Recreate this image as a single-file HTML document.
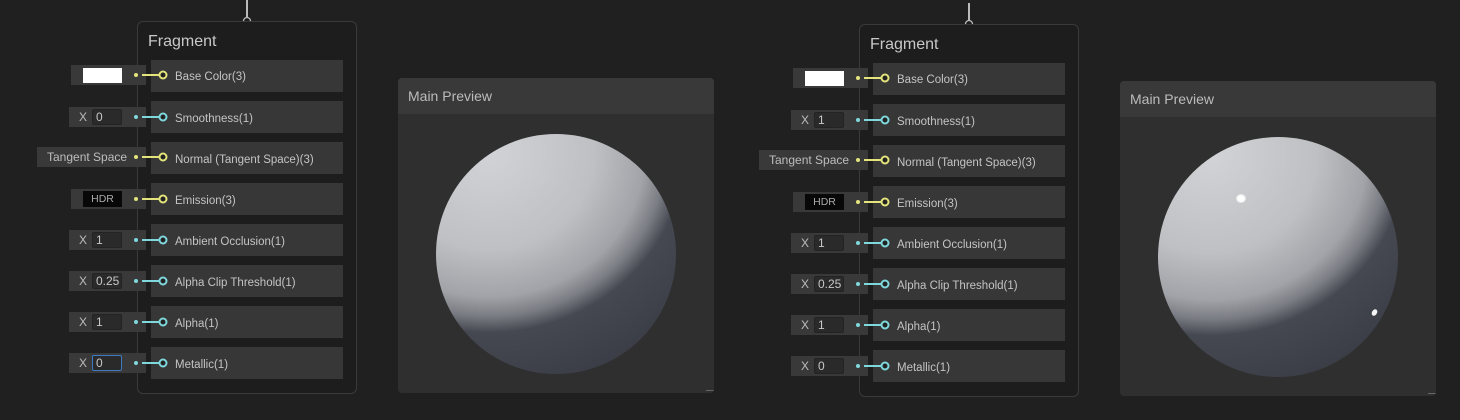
<!DOCTYPE html>
<html><head><meta charset="utf-8"><style>
*{margin:0;padding:0;box-sizing:border-box}
body{width:1460px;height:417px;background:#202020;position:relative;overflow:hidden;font-family:"Liberation Sans",sans-serif;}
.a{position:absolute}
.node{position:absolute;left:137px;top:21px;width:220px;height:373px;border:1px solid #3a3a3a;border-radius:6px;background:#1d1d1d}
.title{position:absolute;left:148px;top:33px;color:#c8c8c8;font-size:16px}
.slot{position:absolute;left:151px;width:192px;height:32px;background:#373737}
.lab{position:absolute;left:175px;font-size:11.5px;color:#c4c4c4;line-height:14px;white-space:nowrap}
.inp{position:absolute;height:20px;background:#393939;color:#bdbdbd;font-size:12px;white-space:nowrap}
.fld{position:absolute;top:2px;height:16px;background:#2a2a2a;border:1px solid #232323;border-radius:2px;color:#c8c8c8;font-size:12px;padding-left:3px;line-height:14px}
.prev{position:absolute;width:316px;height:315px;background:#2f2f2f;border-radius:4px;overflow:hidden}
.ph{height:36px;background:#393939;color:#bcbcbc;font-size:14px;padding:10px 0 0 10px}
.sph{position:absolute;width:240px;height:240px;border-radius:50%;
background:radial-gradient(ellipse 125% 115% at 22% 8%,#d2d3d6 0%,#bfc0c3 35%,#a2a3a8 52%,#7a7c83 59%,#454851 65%,#3b3e47 85%,#4a4d57 100%)}
</style></head><body>
<svg class="a" style="left:0;top:0" width="1460" height="417">
<line x1="247" y1="0" x2="247" y2="18" stroke="#bbb" stroke-width="2"/>
<circle cx="247" cy="21" r="3.5" fill="#1d1d1d" stroke="#bbb" stroke-width="1.3"/>
<g transform="translate(722,3)">
<line x1="247" y1="0" x2="247" y2="18" stroke="#bbb" stroke-width="2"/>
<circle cx="247" cy="21" r="3.5" fill="#1d1d1d" stroke="#bbb" stroke-width="1.3"/>
</g>
</svg>
<!-- left node -->
<div class="a" style="left:0;top:0">
<div class="node"></div>
<div class="title">Fragment</div>
<div class="slot" style="top:60px"></div><div class="slot" style="top:101px"></div><div class="slot" style="top:142px"></div><div class="slot" style="top:183px"></div><div class="slot" style="top:224px"></div><div class="slot" style="top:265px"></div><div class="slot" style="top:306px"></div><div class="slot" style="top:347px"></div>
<div class="lab" style="top:70px">Base Color(3)</div>
<div class="lab" style="top:112px">Smoothness(1)</div>
<div class="lab" style="top:153px">Normal (Tangent Space)(3)</div>
<div class="lab" style="top:194px">Emission(3)</div>
<div class="lab" style="top:235px">Ambient Occlusion(1)</div>
<div class="lab" style="top:276px">Alpha Clip Threshold(1)</div>
<div class="lab" style="top:317px">Alpha(1)</div>
<div class="lab" style="top:358px">Metallic(1)</div>
<div class="inp" style="left:71px;top:65px;width:75px"><div class="a" style="left:12px;top:3px;width:39px;height:15px;background:#fff"></div></div>
<div class="inp" style="left:69px;top:107px;width:77px"><span class="a" style="left:10px;top:3px">X</span><div class="fld" style="left:23px;width:30px">0</div></div>
<div class="inp" style="left:37px;top:147px;width:109px"><span class="a" style="left:10px;top:3px">Tangent Space</span></div>
<div class="inp" style="left:71px;top:189px;width:75px"><div class="a" style="left:12px;top:2px;width:39px;height:16px;background:#080808;color:#aaa;font-size:10.5px;text-align:center;line-height:16px">HDR</div></div>
<div class="inp" style="left:69px;top:230px;width:77px"><span class="a" style="left:10px;top:3px">X</span><div class="fld" style="left:23px;width:30px">1</div></div>
<div class="inp" style="left:69px;top:271px;width:77px"><span class="a" style="left:10px;top:3px">X</span><div class="fld" style="left:23px;width:30px">0.25</div></div>
<div class="inp" style="left:69px;top:312px;width:77px"><span class="a" style="left:10px;top:3px">X</span><div class="fld" style="left:23px;width:30px">1</div></div>
<div class="inp" style="left:69px;top:353px;width:77px"><span class="a" style="left:10px;top:3px">X</span><div class="fld" style="left:23px;width:30px;border-color:#3d7ac2">0</div></div>
<svg class="a" style="left:0;top:0" width="400" height="417">
<g stroke-width="2">
<g stroke="#e4e47c" fill="#e4e47c"><circle cx="136" cy="75" r="2" stroke="none"/><line x1="142" y1="75" x2="160" y2="75"/><circle cx="163" cy="75" r="3.5" fill="#222"/></g>
<g stroke="#7fd8dc" fill="#7fd8dc"><circle cx="136" cy="117" r="2" stroke="none"/><line x1="142" y1="117" x2="160" y2="117"/><circle cx="163" cy="117" r="3.5" fill="#222"/></g>
<g stroke="#e4e47c" fill="#e4e47c"><circle cx="136" cy="157" r="2" stroke="none"/><line x1="142" y1="157" x2="160" y2="157"/><circle cx="163" cy="157" r="3.5" fill="#222"/></g>
<g stroke="#e4e47c" fill="#e4e47c"><circle cx="136" cy="199" r="2" stroke="none"/><line x1="142" y1="199" x2="160" y2="199"/><circle cx="163" cy="199" r="3.5" fill="#222"/></g>
<g stroke="#7fd8dc" fill="#7fd8dc"><circle cx="136" cy="240" r="2" stroke="none"/><line x1="142" y1="240" x2="160" y2="240"/><circle cx="163" cy="240" r="3.5" fill="#222"/></g>
<g stroke="#7fd8dc" fill="#7fd8dc"><circle cx="136" cy="281" r="2" stroke="none"/><line x1="142" y1="281" x2="160" y2="281"/><circle cx="163" cy="281" r="3.5" fill="#222"/></g>
<g stroke="#7fd8dc" fill="#7fd8dc"><circle cx="136" cy="322" r="2" stroke="none"/><line x1="142" y1="322" x2="160" y2="322"/><circle cx="163" cy="322" r="3.5" fill="#222"/></g>
<g stroke="#7fd8dc" fill="#7fd8dc"><circle cx="136" cy="363" r="2" stroke="none"/><line x1="142" y1="363" x2="160" y2="363"/><circle cx="163" cy="363" r="3.5" fill="#222"/></g>
</g></svg>
</div>
<!-- right node -->
<div class="a" style="left:722px;top:3px">
<div class="node"></div>
<div class="title">Fragment</div>
<div class="slot" style="top:60px"></div><div class="slot" style="top:101px"></div><div class="slot" style="top:142px"></div><div class="slot" style="top:183px"></div><div class="slot" style="top:224px"></div><div class="slot" style="top:265px"></div><div class="slot" style="top:306px"></div><div class="slot" style="top:347px"></div>
<div class="lab" style="top:70px">Base Color(3)</div>
<div class="lab" style="top:112px">Smoothness(1)</div>
<div class="lab" style="top:153px">Normal (Tangent Space)(3)</div>
<div class="lab" style="top:194px">Emission(3)</div>
<div class="lab" style="top:235px">Ambient Occlusion(1)</div>
<div class="lab" style="top:276px">Alpha Clip Threshold(1)</div>
<div class="lab" style="top:317px">Alpha(1)</div>
<div class="lab" style="top:358px">Metallic(1)</div>
<div class="inp" style="left:71px;top:65px;width:75px"><div class="a" style="left:12px;top:3px;width:39px;height:15px;background:#fff"></div></div>
<div class="inp" style="left:69px;top:107px;width:77px"><span class="a" style="left:10px;top:3px">X</span><div class="fld" style="left:23px;width:30px">1</div></div>
<div class="inp" style="left:37px;top:147px;width:109px"><span class="a" style="left:10px;top:3px">Tangent Space</span></div>
<div class="inp" style="left:71px;top:189px;width:75px"><div class="a" style="left:12px;top:2px;width:39px;height:16px;background:#080808;color:#aaa;font-size:10.5px;text-align:center;line-height:16px">HDR</div></div>
<div class="inp" style="left:69px;top:230px;width:77px"><span class="a" style="left:10px;top:3px">X</span><div class="fld" style="left:23px;width:30px">1</div></div>
<div class="inp" style="left:69px;top:271px;width:77px"><span class="a" style="left:10px;top:3px">X</span><div class="fld" style="left:23px;width:30px">0.25</div></div>
<div class="inp" style="left:69px;top:312px;width:77px"><span class="a" style="left:10px;top:3px">X</span><div class="fld" style="left:23px;width:30px">1</div></div>
<div class="inp" style="left:69px;top:353px;width:77px"><span class="a" style="left:10px;top:3px">X</span><div class="fld" style="left:23px;width:30px">0</div></div>
<svg class="a" style="left:0;top:0" width="400" height="417">
<g stroke-width="2">
<g stroke="#e4e47c" fill="#e4e47c"><circle cx="136" cy="75" r="2" stroke="none"/><line x1="142" y1="75" x2="160" y2="75"/><circle cx="163" cy="75" r="3.5" fill="#222"/></g>
<g stroke="#7fd8dc" fill="#7fd8dc"><circle cx="136" cy="117" r="2" stroke="none"/><line x1="142" y1="117" x2="160" y2="117"/><circle cx="163" cy="117" r="3.5" fill="#222"/></g>
<g stroke="#e4e47c" fill="#e4e47c"><circle cx="136" cy="157" r="2" stroke="none"/><line x1="142" y1="157" x2="160" y2="157"/><circle cx="163" cy="157" r="3.5" fill="#222"/></g>
<g stroke="#e4e47c" fill="#e4e47c"><circle cx="136" cy="199" r="2" stroke="none"/><line x1="142" y1="199" x2="160" y2="199"/><circle cx="163" cy="199" r="3.5" fill="#222"/></g>
<g stroke="#7fd8dc" fill="#7fd8dc"><circle cx="136" cy="240" r="2" stroke="none"/><line x1="142" y1="240" x2="160" y2="240"/><circle cx="163" cy="240" r="3.5" fill="#222"/></g>
<g stroke="#7fd8dc" fill="#7fd8dc"><circle cx="136" cy="281" r="2" stroke="none"/><line x1="142" y1="281" x2="160" y2="281"/><circle cx="163" cy="281" r="3.5" fill="#222"/></g>
<g stroke="#7fd8dc" fill="#7fd8dc"><circle cx="136" cy="322" r="2" stroke="none"/><line x1="142" y1="322" x2="160" y2="322"/><circle cx="163" cy="322" r="3.5" fill="#222"/></g>
<g stroke="#7fd8dc" fill="#7fd8dc"><circle cx="136" cy="363" r="2" stroke="none"/><line x1="142" y1="363" x2="160" y2="363"/><circle cx="163" cy="363" r="3.5" fill="#222"/></g>
</g></svg>
</div>
<!-- previews -->
<div class="prev" style="left:398px;top:78px"><div class="ph">Main Preview</div>
<div class="sph" style="left:38px;top:56px"></div>
<div class="a" style="right:0;bottom:2px;width:8px;height:1px;background:#666"></div></div>
<div class="prev" style="left:1120px;top:81px"><div class="ph">Main Preview</div>
<div class="sph" style="left:38px;top:56px"></div>
<div class="a" style="left:116px;top:113px;width:10px;height:9px;border-radius:50%;background:radial-gradient(#fff 40%,rgba(255,255,255,0) 100%)"></div>
<div class="a" style="left:252px;top:228px;width:5px;height:7px;border-radius:50%;background:#f4f4f4;transform:rotate(30deg)"></div>
<div class="a" style="right:0;bottom:2px;width:8px;height:1px;background:#666"></div></div>
</body></html>
